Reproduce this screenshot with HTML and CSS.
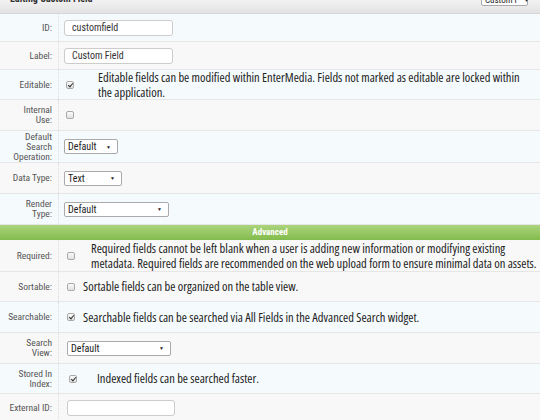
FILE: index.html
```html
<!DOCTYPE html>
<html>
<head>
<meta charset="utf-8">
<link rel="stylesheet" href="styles.css">
</head>
<body>
<div class="page">
  <div class="header">
    <span class="title">Editing Custom Field</span>
    <span class="topsel">Custom F <span class="arr">▼</span></span>
  </div>
  <div class="rows">
    <div class="row blue h28"><div class="lab">ID:</div><div class="val"><span class="input">customfield</span></div></div>
    <div class="row grey h28"><div class="lab">Label:</div><div class="val"><span class="input">Custom Field</span></div></div>
    <div class="row blue h30"><div class="lab">Editable:</div><div class="val"><span class="cb checked"></span><span class="desc d1">Editable fields can be modified within EnterMedia. Fields not marked as editable are locked within the application.</span></div></div>
    <div class="row grey h31"><div class="lab">Internal<br>Use:</div><div class="val"><span class="cb"></span></div></div>
    <div class="row blue h32"><div class="lab">Default<br>Search<br>Operation:</div><div class="val"><span class="select w55">Default<span class="arr">▼</span></span></div></div>
    <div class="row grey h31"><div class="lab">Data Type:</div><div class="val"><span class="select w58">Text<span class="arr">▼</span></span></div></div>
    <div class="row blue h31"><div class="lab">Render<br>Type:</div><div class="val"><span class="select w105">Default<span class="arr">▼</span></span></div></div>
    <div class="section">Advanced</div>
    <div class="row grey h32"><div class="lab">Required:</div><div class="val lower"><span class="cb"></span><span class="desc d2">Required fields cannot be left blank when a user is adding new information or modifying existing metadata. Required fields are recommended on the web upload form to ensure minimal data on assets.</span></div></div>
    <div class="row grey h30"><div class="lab">Sortable:</div><div class="val lower"><span class="cb"></span><span class="desc d3">Sortable fields can be organized on the table view.</span></div></div>
    <div class="row blue h31"><div class="lab">Searchable:</div><div class="val lower"><span class="cb checked"></span><span class="desc d3">Searchable fields can be searched via All Fields in the Advanced Search widget.</span></div></div>
    <div class="row grey h31"><div class="lab">Search<br>View:</div><div class="val lower2"><span class="select w104">Default<span class="arr">▼</span></span></div></div>
    <div class="row blue h30"><div class="lab">Stored In<br>Index:</div><div class="val lower2"><span class="cb checked"></span><span class="desc d4">Indexed fields can be searched faster.</span></div></div>
    <div class="row grey h28"><div class="lab">External ID:</div><div class="val lower2"><span class="input wide"></span></div></div>
  </div>
</div>
</body>
</html>
```

FILE: styles.css
```css
html, body {
  margin: 0;
  padding: 0;
  background: #ffffff;
}
.page {
  width: 540px;
  height: 420px;
  overflow: hidden;
  font-family: Roboto, "Liberation Sans", sans-serif;
  font-stretch: 82%;
  font-size: 10px;
  color: #333;
}
.header {
  height: 14px;
  background: linear-gradient(#f2f2f2, #e2e2e2);
  border-bottom: 1px solid #d6d6d6;
  position: relative;
  overflow: hidden;
  box-sizing: border-box;
}
.title {
  position: absolute;
  left: 10px;
  top: -7px;
  font-weight: bold;
  font-size: 10px;
  color: #333;
}
.topsel {
  position: absolute;
  left: 481px;
  top: -6px;
  width: 47px;
  height: 12px;
  box-sizing: border-box;
  border: 1px solid #aaa;
  border-radius: 2px;
  background: #fff;
  font-size: 9px;
  line-height: 10px;
  padding-left: 3px;
  color: #222;
  white-space: nowrap;
}
.topsel .arr {
  font-size: 5px;
  margin-left: 3px;
  vertical-align: 1px;
}
.rows {
  display: flex;
  flex-direction: column;
}
.row {
  display: flex;
  border-bottom: 1px solid #e6e6e6;
  box-sizing: border-box;
}
.row.blue { background: #f5fafd; }
.row.grey { background: #f8f8f8; }
.h28 { height: 28px; }
.h30 { height: 30px; }
.h31 { height: 31px; }
.h32 { height: 32px; }
.lab {
  width: 59px;
  flex: none;
  box-sizing: border-box;
  padding-right: 6px;
  text-align: right;
  color: #555;
  font-size: 9.5px;
  line-height: 10px;
  display: flex;
  align-items: center;
  justify-content: flex-end;
  border-right: 1px dotted #dcdcdc;
  white-space: nowrap;
}
.val {
  flex: 1;
  display: flex;
  align-items: center;
  padding-left: 5px;
}
.val.lower { padding-left: 6px; }
.val.lower2 { padding-left: 8px; }
.input {
  display: inline-block;
  width: 109px;
  height: 16px;
  box-sizing: border-box;
  border: 1px solid #ccc;
  border-radius: 3px;
  background: #fff;
  padding-left: 7px;
  line-height: 14px;
  font-size: 10px;
  color: #333;
}
.input.wide { width: 108px; }
.select {
  display: inline-flex;
  align-items: center;
  justify-content: space-between;
  height: 15px;
  box-sizing: border-box;
  border: 1px solid #aaa;
  border-radius: 2px;
  background: #fff;
  padding: 0 6px 0 3px;
  font-size: 10px;
  color: #222;
}
.select .arr { font-size: 5px; }
.w55 { width: 54px; }
.w58 { width: 58px; }
.w105 { width: 105px; }
.w104 { width: 104px; }
.cb {
  width: 8px;
  height: 8px;
  box-sizing: border-box;
  border: 1px solid #aaa;
  border-radius: 2px;
  background: linear-gradient(#fafafa, #e2e2e2);
  margin-left: 2px;
  flex: none;
  position: relative;
}
.cb.checked::after {
  content: "";
  position: absolute;
  left: 1.5px;
  top: 0px;
  width: 2px;
  height: 4px;
  border: solid #333;
  border-width: 0 1.5px 1.5px 0;
  transform: rotate(40deg);
}
.desc {
  font-family: "Open Sans", sans-serif;
  font-stretch: 81%;
  font-size: 12.5px;
  line-height: 15px;
  color: #222;
}
.d1 { margin-left: 24px; max-width: 432px; }
.d2 { margin-left: 16px; }
.d3 { margin-left: 8px; }
.d4 { margin-left: 20px; }
.section {
  height: 15px;
  background: linear-gradient(#acd47e, #82bb4c);
  color: #fff;
  font-weight: bold;
  font-size: 9px;
  text-align: center;
  line-height: 15px;
}
```
